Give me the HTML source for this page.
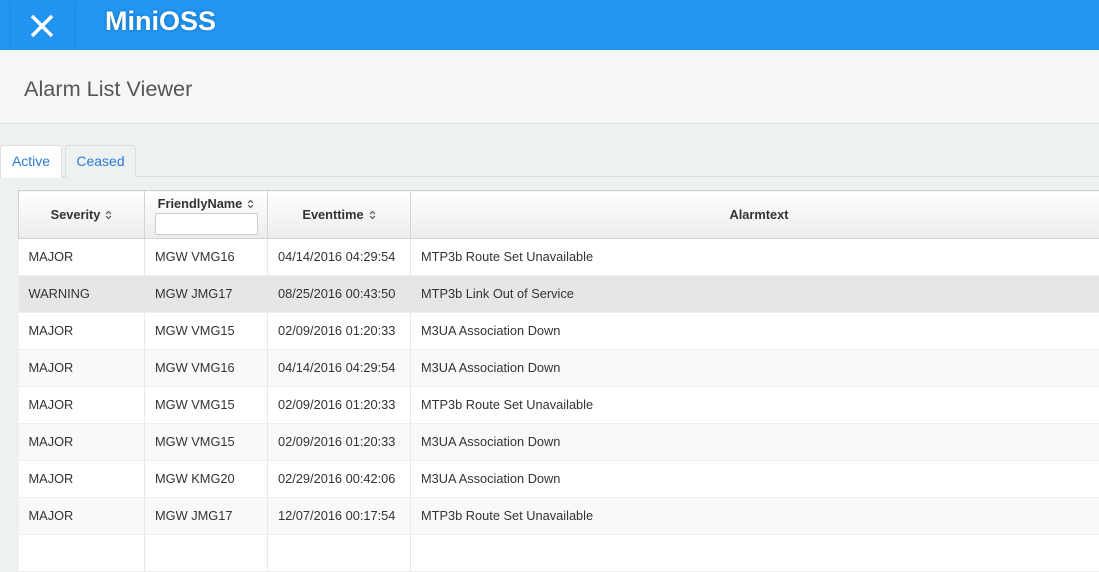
<!DOCTYPE html>
<html><head><meta charset="utf-8"><style>
*{box-sizing:border-box;margin:0;padding:0}
body{width:1099px;height:543px;overflow:hidden;font-family:"Liberation Sans",sans-serif;background:#eef1f2;position:relative}
.top{position:absolute;left:0;top:0;width:1099px;height:50px;background:#2196f3}
.xbtn{position:absolute;left:11px;top:0;width:63px;height:50px;background:#2193f0;box-shadow:0 0 4px rgba(0,0,0,.15)}
.brand{position:absolute;left:105px;top:6px;color:#fff;font-weight:bold;font-size:27px;text-shadow:0 0 3px rgba(0,0,0,.3)}
.hdr{position:absolute;left:0;top:50px;width:1099px;height:74px;background:#f5f6f6;border-bottom:1px solid #dcdfe0}
.hdr h1{position:absolute;left:24px;top:26px;font-weight:normal;font-size:21.7px;color:#555}
.tabs{position:absolute;left:0;top:145px;width:1099px;height:32px;border-bottom:1px solid #ddd}
.tab{position:absolute;top:0;height:32px;font-size:14px;color:#2a7bd3;padding-top:7px;text-align:center;border:1px solid #ddd;border-bottom:none;border-radius:3px 3px 0 0}
table{position:absolute;left:18px;top:190px;width:1090px;border-collapse:collapse;font-size:12.8px;color:#333}
th{height:48px;font-weight:bold;font-size:12.8px;background:linear-gradient(#fff,#ececec);border:1px solid #d4d4d4;color:#333}
td{height:37px;padding-left:10px;padding-bottom:2px;border-right:1px solid #e8e8e8;border-bottom:1px solid #eee}
tr.o td{background:#f9f9f9}tr.e td{background:#fff}tr.w td{background:#e6e6e6}
.s{display:inline-block;margin-left:5px;vertical-align:-1px}
input{display:block;width:103px;height:22px;margin:2px auto 0;border:1px solid #ccc;border-radius:2px;background:#fff}
</style></head><body>
<div class="top"><div class="xbtn"><svg width="63" height="50"><path d="M21 16L41 36M41 16L21 36" stroke="#fff" stroke-width="3.5"/></svg></div><div class="brand">MiniOSS</div></div>
<div class="hdr"><h1>Alarm List Viewer</h1></div>
<div class="tabs">
<div class="tab" style="left:0;width:62px;background:#fff;height:33px">Active</div>
<div class="tab" style="left:65px;width:71px;background:#eef1f2">Ceased</div>
</div>
<table>
<tr><th style="width:126px">Severity<svg class="s" width="7" height="10"><path d="M1 4L3.5 1.5L6 4M1 6L3.5 8.5L6 6" fill="none" stroke="#555" stroke-width="1.2"/></svg></th><th style="width:123px;vertical-align:top;padding-top:5px">FriendlyName<svg class="s" width="7" height="10"><path d="M1 4L3.5 1.5L6 4M1 6L3.5 8.5L6 6" fill="none" stroke="#555" stroke-width="1.2"/></svg><input></th><th style="width:143px">Eventtime<svg class="s" width="7" height="10"><path d="M1 4L3.5 1.5L6 4M1 6L3.5 8.5L6 6" fill="none" stroke="#555" stroke-width="1.2"/></svg></th><th>Alarmtext</th></tr>
<tr class="e"><td>MAJOR</td><td>MGW VMG16</td><td>04/14/2016 04:29:54</td><td>MTP3b Route Set Unavailable</td></tr>
<tr class="w"><td>WARNING</td><td>MGW JMG17</td><td>08/25/2016 00:43:50</td><td>MTP3b Link Out of Service</td></tr>
<tr class="e"><td>MAJOR</td><td>MGW VMG15</td><td>02/09/2016 01:20:33</td><td>M3UA Association Down</td></tr>
<tr class="o"><td>MAJOR</td><td>MGW VMG16</td><td>04/14/2016 04:29:54</td><td>M3UA Association Down</td></tr>
<tr class="e"><td>MAJOR</td><td>MGW VMG15</td><td>02/09/2016 01:20:33</td><td>MTP3b Route Set Unavailable</td></tr>
<tr class="o"><td>MAJOR</td><td>MGW VMG15</td><td>02/09/2016 01:20:33</td><td>M3UA Association Down</td></tr>
<tr class="e"><td>MAJOR</td><td>MGW KMG20</td><td>02/29/2016 00:42:06</td><td>M3UA Association Down</td></tr>
<tr class="o"><td>MAJOR</td><td>MGW JMG17</td><td>12/07/2016 00:17:54</td><td>MTP3b Route Set Unavailable</td></tr>
<tr class="e"><td></td><td></td><td></td><td></td></tr>
</table>
</body></html>
